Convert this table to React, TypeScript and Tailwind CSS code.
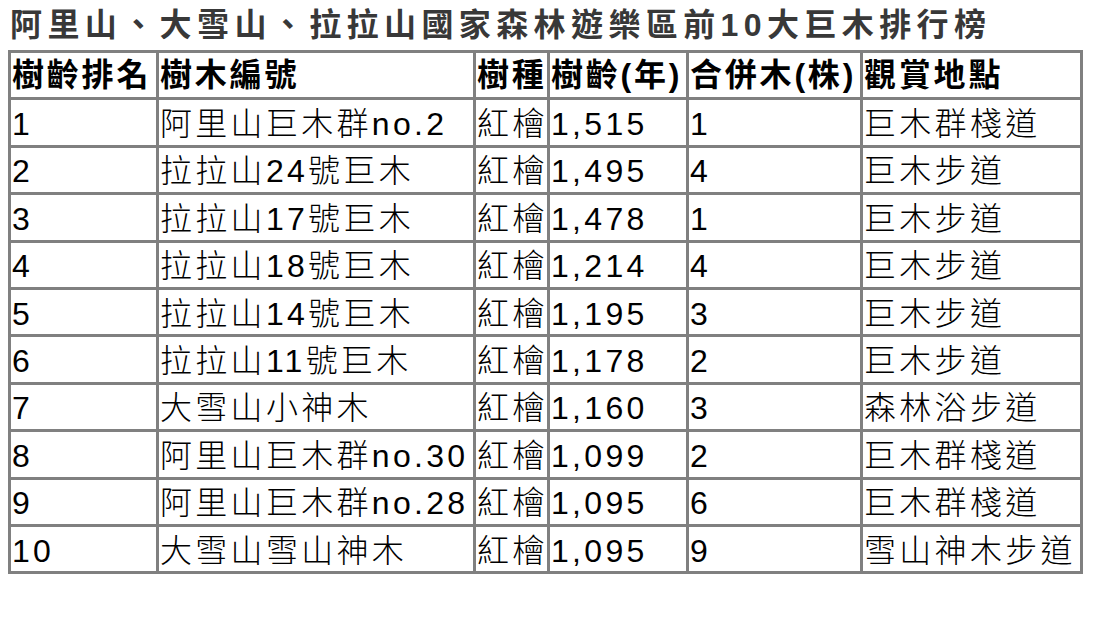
const rows: string[][] = [
  ["1", "阿里山巨木群no.2", "紅檜", "1,515", "1", "巨木群棧道"],
  ["2", "拉拉山24號巨木", "紅檜", "1,495", "4", "巨木步道"],
  ["3", "拉拉山17號巨木", "紅檜", "1,478", "1", "巨木步道"],
  ["4", "拉拉山18號巨木", "紅檜", "1,214", "4", "巨木步道"],
  ["5", "拉拉山14號巨木", "紅檜", "1,195", "3", "巨木步道"],
  ["6", "拉拉山11號巨木", "紅檜", "1,178", "2", "巨木步道"],
  ["7", "大雪山小神木", "紅檜", "1,160", "3", "森林浴步道"],
  ["8", "阿里山巨木群no.30", "紅檜", "1,099", "2", "巨木群棧道"],
  ["9", "阿里山巨木群no.28", "紅檜", "1,095", "6", "巨木群棧道"],
  ["10", "大雪山雪山神木", "紅檜", "1,095", "9", "雪山神木步道"],
];

const headers = ["樹齡排名", "樹木編號", "樹種", "樹齡(年)", "合併木(株)", "觀賞地點"];

export default function App() {
  return (
    <div className="w-[1093px] h-[628px] bg-white font-['Liberation_Sans','Noto_Sans_CJK_TC',sans-serif] text-black">
      <h1 className="h-[50px] pl-[10px] pt-[5px] text-[32px] leading-[40px] font-bold tracking-[5.4px] text-[#383838] whitespace-nowrap">
        阿里山、大雪山、拉拉山國家森林遊樂區前10大巨木排行榜
      </h1>
      <table className="ml-[8px] w-[1075px] table-fixed border-collapse border-[3px] border-[#808080] text-[32px] tracking-[3.3px] leading-none">
        <colgroup>
          <col className="w-[148px]" />
          <col className="w-[317px]" />
          <col className="w-[74px]" />
          <col className="w-[139px]" />
          <col className="w-[174px]" />
          <col className="w-[220px]" />
        </colgroup>
        <thead>
          <tr className="h-[47.4px]">
            {headers.map((h) => (
              <th
                key={h}
                className="border-[3px] border-[#808080] px-[1px] text-left align-middle font-bold tracking-[2.8px] whitespace-nowrap overflow-hidden"
              >
                {h}
              </th>
            ))}
          </tr>
        </thead>
        <tbody>
          {rows.map((r) => (
            <tr key={r[0]} className="h-[47.4px]">
              {r.map((c, i) => (
                <td
                  key={i}
                  className="border-[3px] border-[#808080] px-[1px] pt-[3px] align-middle font-light whitespace-nowrap overflow-hidden"
                >
                  {c}
                </td>
              ))}
            </tr>
          ))}
        </tbody>
      </table>
    </div>
  );
}
